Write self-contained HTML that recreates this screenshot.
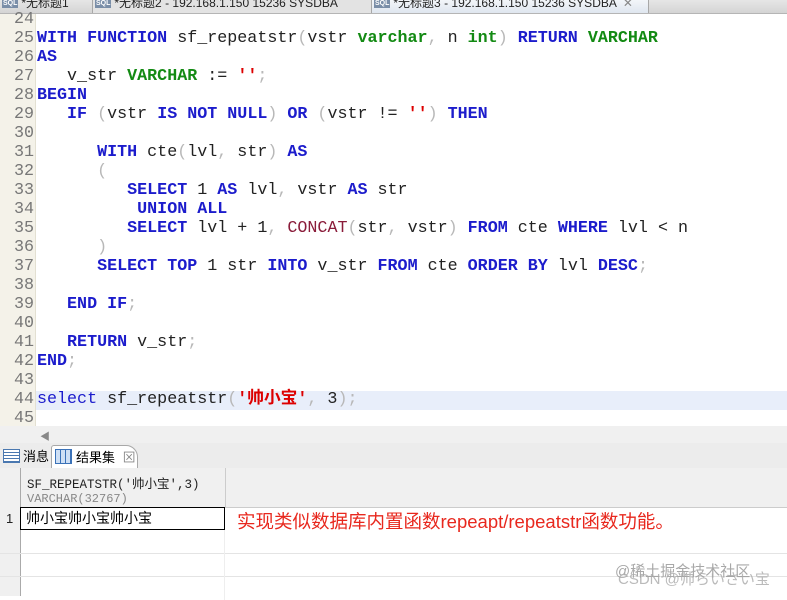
<!DOCTYPE html>
<html><head><meta charset="utf-8"><style>
body{margin:0;width:787px;height:596px;overflow:hidden;background:#fff;position:relative;font-family:"Liberation Sans","Noto Sans CJK SC",sans-serif}
.tabs{position:absolute;left:0;top:0;width:787px;height:13px;background:linear-gradient(#e6e6e6,#d4d4d4);border-bottom:1px solid #b5b5b5;font-size:12px;line-height:11px;overflow:hidden}
.tab{position:absolute;top:-2px;height:15px;border-right:1px solid #a8a8a8;white-space:nowrap;color:#222}
.sql{display:inline-block;font-size:7px;font-weight:bold;color:#fff;background:#7a8ea8;padding:0 1px;margin:0 3px 0 2px;vertical-align:2px;line-height:8px}
.gut{position:absolute;left:0;top:14px;width:35px;height:412px;background:#f4f2e9;border-right:1px solid #e3e0d2}
pre{position:absolute;margin:0;left:0;top:10px;font-family:"Liberation Mono","Noto Sans CJK SC",monospace;font-size:16.7px;line-height:19px;color:#222}
.k{color:#1c1ccc;font-weight:bold}.t{color:#138a13;font-weight:bold}.s{color:#d00;font-weight:bold}.p{color:#b8b8b8}.f{color:#8a1c3a}
.hl{position:absolute;left:36px;top:391px;width:751px;height:19px;background:#e8eefa}
.hs{position:absolute;left:0;top:426px;width:787px;height:17px;background:#f0f0f0}
.pt{position:absolute;left:0;top:443px;width:787px;height:25px;background:#ececec;border-bottom:1px solid #a8a8a8;font-size:13px}
.grid{position:absolute;left:0;top:468px;width:787px;height:128px}
</style></head><body>
<div class="tabs">
<div class="tab" style="left:0;width:92px"><span class="sql">SQL</span>*无标题1</div>
<div class="tab" style="left:93px;width:278px;background:#e3e3e3"><span class="sql">SQL</span>*无标题2 - 192.168.1.150 15236 SYSDBA</div>
<div class="tab" style="left:372px;width:276px;background:linear-gradient(#f6f8fb,#dfe6ef)"><span class="sql">SQL</span>*无标题3 - 192.168.1.150 15236 SYSDBA &nbsp;<span style="color:#888">✕</span></div>
</div>
<div class="gut"></div>
<div class="hl"></div>
<pre style="left:0;color:#777;text-align:right;width:34px;font-weight:normal">24
25
26
27
28
29
30
31
32
33
34
35
36
37
38
39
40
41
42
43
44
45</pre>
<pre style="left:37px">

<span class="k">WITH FUNCTION</span> sf_repeatstr<span class="p">(</span>vstr <span class="t">varchar</span><span class="p">,</span> n <span class="t">int</span><span class="p">)</span> <span class="k">RETURN</span> <span class="t">VARCHAR</span>
<span class="k">AS</span>
   v_str <span class="t">VARCHAR</span> := <span class="s">''</span><span class="p">;</span>
<span class="k">BEGIN</span>
   <span class="k">IF</span> <span class="p">(</span>vstr <span class="k">IS NOT NULL</span><span class="p">)</span> <span class="k">OR</span> <span class="p">(</span>vstr != <span class="s">''</span><span class="p">)</span> <span class="k">THEN</span>

      <span class="k">WITH</span> cte<span class="p">(</span>lvl<span class="p">,</span> str<span class="p">)</span> <span class="k">AS</span>
      <span class="p">(</span>
         <span class="k">SELECT</span> 1 <span class="k">AS</span> lvl<span class="p">,</span> vstr <span class="k">AS</span> str
          <span class="k">UNION ALL</span>
         <span class="k">SELECT</span> lvl + 1<span class="p">,</span> <span class="f">CONCAT</span><span class="p">(</span>str<span class="p">,</span> vstr<span class="p">)</span> <span class="k">FROM</span> cte <span class="k">WHERE</span> lvl &lt; n
      <span class="p">)</span>
      <span class="k">SELECT TOP</span> 1 str <span class="k">INTO</span> v_str <span class="k">FROM</span> cte <span class="k">ORDER BY</span> lvl <span class="k">DESC</span><span class="p">;</span>

   <span class="k">END IF</span><span class="p">;</span>

   <span class="k">RETURN</span> v_str<span class="p">;</span>
<span class="k">END</span><span class="p">;</span>

<span class="k" style="font-weight:normal">select</span> sf_repeatstr<span class="p">(</span><span class="s">'帅小宝'</span><span class="p">,</span> 3<span class="p">);</span>
</pre>
<div class="hs"><span style="position:absolute;left:40px;top:2px;font-size:10px;color:#888">◀</span></div>
<div class="pt">
<div style="position:absolute;left:0;top:3px;height:22px;width:50px;line-height:22px"><span style="display:inline-block;width:15px;height:12px;border:1px solid #4a78b0;vertical-align:-2px;margin:0 3px 0 3px;background:repeating-linear-gradient(#fff 0 2px,#4a78b0 2px 3px)"></span>消息</div>
<div style="position:absolute;left:51px;top:2px;height:24px;width:85px;background:#fff;border:1px solid #a8a8a8;border-bottom:none;border-radius:3px 12px 0 0;line-height:24px"><span style="display:inline-block;width:15px;height:13px;border:1px solid #3b72b8;vertical-align:-2px;margin:0 4px 0 3px;background:repeating-linear-gradient(90deg,#cfe0f5 0 4px,#3b72b8 4px 5px)"></span>结果集 <span style="color:#888;margin-left:4px">⊠</span></div>
</div>
<div class="grid">
<div style="position:absolute;left:0;top:0;width:787px;height:39px;background:#f0f0f0;border-bottom:1px solid #ccc"></div>
<div style="position:absolute;left:20px;top:0;width:204px;height:39px;border-left:1px solid #aaa;border-right:1px solid #ccc"></div>
<div style="position:absolute;left:0;top:39px;width:20px;height:89px;background:#f0f0f0;border-right:1px solid #aaa"></div>
<div style="position:absolute;left:27px;top:5px;font-family:'Liberation Mono','Noto Sans CJK SC',monospace;font-size:12.5px;color:#222">SF_REPEATSTR('帅小宝',3)</div>
<div style="position:absolute;left:27px;top:24px;font-family:'Liberation Mono',monospace;font-size:12px;color:#888">VARCHAR(32767)</div>
<div style="position:absolute;left:20px;top:39px;border:1px solid #000;font-size:14px;line-height:21px;padding-left:5px;box-sizing:border-box;width:205px;height:23px">帅小宝帅小宝帅小宝</div>
<div style="position:absolute;left:6px;top:43px;font-size:13px;color:#222">1</div>
<div style="position:absolute;left:0;top:85px;width:787px;border-top:1px solid #e4e4e4"></div>
<div style="position:absolute;left:0;top:108px;width:787px;border-top:1px solid #e4e4e4"></div>
<div style="position:absolute;left:224px;top:62px;height:70px;border-left:1px solid #eee"></div>
<div style="position:absolute;left:237px;top:40px;font-size:18.5px;color:#e8281e;white-space:nowrap">实现类似数据库内置函数repeapt/repeatstr函数功能。</div>
<div style="position:absolute;left:615px;top:92px;font-size:15px;color:#999;white-space:nowrap;opacity:.85">@稀土掘金技术社区</div>
<div style="position:absolute;left:618px;top:100px;font-size:15px;color:#aaa;white-space:nowrap;opacity:.8">CSDN @帅らいさい宝</div>
</div>
</body></html>
